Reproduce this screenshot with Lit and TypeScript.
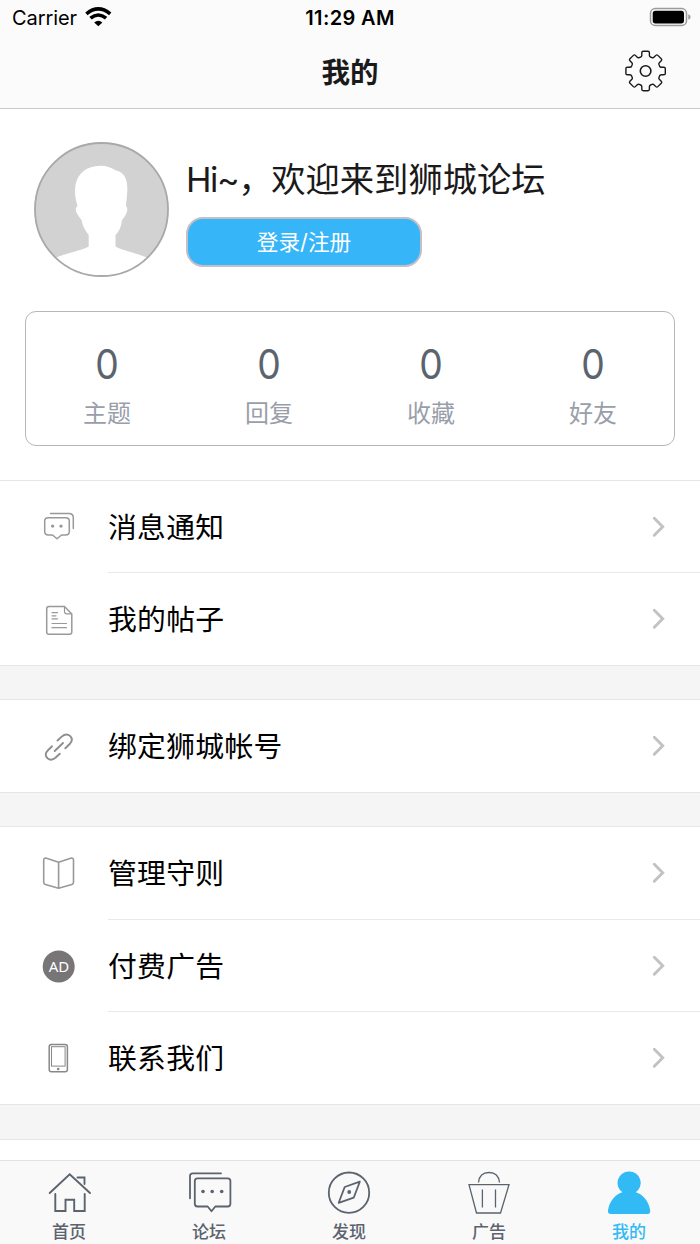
import { LitElement, html, css, svg } from "lit";
import { customElement, property } from "lit/decorators.js";

const toothAngles = [0, 45, 90, 135, 180, 225, 270, 315];

function gearPath(): string {
  const tooth: [string, number[][]][] = [
    ["L", [[-4.9, -14]]],
    ["Q", [[-3.8, -14.5], [-3.8, -15.6]]],
    ["L", [[-3.8, -18.3]]],
    ["Q", [[-3.8, -19.7], [-2.4, -19.7]]],
    ["L", [[2.4, -19.7]]],
    ["Q", [[3.8, -19.7], [3.8, -18.3]]],
    ["L", [[3.8, -15.6]]],
    ["Q", [[3.8, -14.5], [4.9, -14]]],
  ];
  let d = "";
  for (const a of toothAngles) {
    const r = (a * Math.PI) / 180;
    for (const [cmd, pts] of tooth) {
      const p = pts
        .map(([x, y]) => `${(x * Math.cos(r) - y * Math.sin(r)).toFixed(2)} ${(x * Math.sin(r) + y * Math.cos(r)).toFixed(2)}`)
        .join(" ");
      d += (d === "" ? "M" : cmd) + p;
    }
  }
  return d + "Z";
}

const rowIcons: Record<string, unknown> = {
  message: svg`<g fill="none" stroke="#999" stroke-width="1.5" stroke-linecap="round" stroke-linejoin="round">
    <path d="M48.300 517.300h17.500q3.500 0 3.500 3.300v10.400q0 3.500-3.700 3.500h-4.100l-4.500 3.800l-4.500-3.800h-4.100q-3.700 0-3.700-3.500v-10.400q0-3.300 3.600-3.300z"/>
    <path d="M50.500 512.900h18.500q4.300 0 4.300 4.300v10.800"/></g>
    <circle cx="52.600" cy="525.600" r="1.700" fill="#999"/><circle cx="61" cy="525.600" r="1.700" fill="#999"/>`,
  post: svg`<g fill="none" stroke="#999" stroke-width="1.500" stroke-linejoin="round" stroke-linecap="round">
    <path d="M49 606.500h15.500l7.300 7.500v18q0 2.300-2.300 2.300h-20.500q-2.300 0-2.300-2.300v-23.200q0-2.300 2.300-2.300z"/>
    <path d="M64.500 606.700v4.800q0 2.300 2.300 2.300h4.800M52 612.600h5.500M52 615.800h4M52 618.800h5.500M52 623.500h14.500M52 627.700h14.500" stroke-width="1.200"/></g>`,
  link: svg`<g fill="none" stroke="#8e8e8e" stroke-width="1.900" stroke-linecap="round">
    <path d="M57.500 740.500L61.700 736.600Q66.500 732.400 70.300 736.200Q73.700 740 69.700 744L65.300 748.300"/>
    <path d="M52 746.300L48 750.200Q43.700 754.500 47.500 758.200Q51.200 761.300 55.500 757.800L59.800 753.700"/>
    <path d="M54.700 751L63 743"/></g>`,
  book: svg`<path d="M58.600 862.300L46.500 858.300Q43.700 857.500 43.700 860.300V882.300Q43.700 884 45.400 884.500L58.600 888.200L71.800 884.500Q73.500 884 73.500 882.300V860.300Q73.500 857.500 70.700 858.300ZM58.600 862.300V888" fill="none" stroke="#999" stroke-width="1.600" stroke-linejoin="round"/>`,
  ad: svg`<circle cx="58.700" cy="966" r="16" fill="#777576"/>
    <text x="59" y="971.300" text-anchor="middle" style="font-family:'Noto Sans','Open Sans',sans-serif" font-size="15" fill="#fff">AD</text>`,
  phone: svg`<g fill="none" stroke="#888">
    <rect x="49.200" y="1044.500" width="18.200" height="27.300" rx="2.300" stroke-width="1.500"/>
    <rect x="51.500" y="1046.700" width="13.600" height="19.400" stroke-width="1"/></g>
    <circle cx="58.200" cy="1069" r="1.300" fill="#888"/>`,
};

const tabIcons: unknown[] = [
  svg`<g fill="none" stroke="#5b636e" stroke-width="1.900" stroke-linecap="round">
    <path d="M49.700 1193L69.700 1174.300L90 1193M77.500 1177.500H84.500V1184"/>
    <path d="M55.300 1194V1211H65.500V1199.700H74.200V1211H84.700V1194"/></g>`,
  svg`<g fill="none" stroke="#5b636e" stroke-width="1.800" stroke-linecap="round" stroke-linejoin="round">
    <path d="M190 1198.300V1176Q190 1173.300 192.700 1173.300H221"/>
    <path d="M197.500 1178.300H227.700Q230.400 1178.300 230.400 1181V1203.800Q230.400 1206.500 227.700 1206.500H215.300L211.500 1211.300L207.700 1206.500H197.500Q194.800 1206.500 194.800 1203.800V1181Q194.800 1178.300 197.500 1178.300Z"/></g>
    <g fill="#5b636e"><circle cx="203" cy="1191.500" r="1.800"/><circle cx="212.200" cy="1191.500" r="1.800"/><circle cx="221.700" cy="1191.500" r="1.800"/></g>`,
  svg`<g fill="none" stroke="#5b636e" stroke-width="1.800" stroke-linejoin="round">
    <circle cx="349" cy="1192.700" r="20.200"/>
    <path d="M359.800 1181.700L344.700 1187L338.700 1202.800L353.700 1197.700Z"/></g>
    <circle cx="349.200" cy="1192" r="1.900" fill="#5b636e"/>`,
  svg`<path d="M478.500 1182.500Q479.500 1172.500 489 1172.500Q498.500 1172.500 499.500 1182.500M469 1184.700H509L500.500 1213H476.500ZM482.400 1189.500V1207.500M495.500 1189.500V1207.500" fill="none" stroke="#5b636e" stroke-width="1.300"/>`,
  svg`<path d="M629 1171.600a11.300 11.300 0 0 1 6.700 20.700C643.500 1194.500 649 1202 650.200 1210.500Q650.500 1214 647.500 1214H610.700Q607.700 1214 608 1210.500C609.200 1202 614.700 1194.500 622.500 1192.300A11.300 11.300 0 0 1 629 1171.600Z" fill="#32baf5"/>`,
];

@customElement("menu-row")
class MenuRow extends LitElement {
  @property() icon = "";
  @property() label = "";
  @property() box = "";

  static styles = css`
    :host { display: flex; align-items: stretch; flex: 1; }
    .icon { width: 40px; height: 40px; margin: auto 30px auto 38px; flex: none; display: block; }
    .body { flex: 1; display: flex; align-items: center; justify-content: space-between; padding-right: 35px; font-size: 28.800px; letter-spacing: 0.300px; color: #000; }
    .label { line-height: 40px; padding-top: 2px; }
    .chev { width: 14px; height: 22px; display: block; }
  `;

  render() {
    return html`
      <svg class="icon" viewBox=${this.box}>${rowIcons[this.icon]}</svg>
      <div class="body">
        <span class="label">${this.label}</span>
        <svg class="chev" viewBox="0 0 14 22"><path d="M3.300 2.300L11.700 10.800L3.300 19.300" fill="none" stroke="#c2c2c5" stroke-width="2.900" stroke-linecap="round"/></svg>
      </div>
    `;
  }
}

@customElement("app-root")
class AppRoot extends LitElement {
  static styles = css`
    :host { display: block; font-family: Inter, "Noto Sans CJK SC", sans-serif; color: #1a1a1a; }
    * { box-sizing: border-box; }
    .screen { width: 700px; height: 1244px; display: flex; flex-direction: column; background: #fff; overflow: hidden; }
    .top { height: 109px; flex: none; background: #fbfbfb; border-bottom: 1px solid #cbcbcb; display: flex; flex-direction: column; }
    .status { height: 36px; display: grid; grid-template-columns: 1fr auto 1fr; align-items: center; color: #000; padding: 0 9px 0 12px; }
    .carrier { display: flex; align-items: center; gap: 8px; font-size: 20px; letter-spacing: -0.080px; line-height: 36px; }
    .clock { font-size: 20px; font-weight: 600; letter-spacing: 0.350px; line-height: 36px; padding-right: 3px; }
    .wifi { width: 27px; height: 20px; display: block; margin-bottom: 2px; }
    .battery { width: 42px; height: 20px; justify-self: end; display: block; margin-bottom: 2px; }
    .nav { flex: 1; display: grid; grid-template-columns: 1fr auto 1fr; align-items: center; padding: 0 32px; }
    .title { grid-column: 2; font-size: 28.500px; font-weight: 700; line-height: 42px; padding-top: 1px; }
    .gear { width: 44px; height: 44px; justify-self: end; display: block; margin-bottom: 3px; }
    .profile { height: 371px; flex: none; padding: 33px 25px 0; display: flex; flex-direction: column; gap: 34px; }
    .user { height: 135px; display: flex; gap: 17px; padding-left: 9px; }
    .avatar { width: 135px; height: 135px; display: block; flex: none; }
    .hello { padding-top: 14px; }
    .greet { font-size: 34.300px; line-height: 48px; white-space: nowrap; }
    .hi { letter-spacing: -1.400px; }
    .login { width: 236px; height: 50px; margin-top: 13px; border: 2px solid #c2bfc5; border-radius: 17px; background: #36b5f9; color: #fff; font-size: 21.700px; display: flex; align-items: center; justify-content: center; padding-bottom: 3px; }
    .stats { height: 135px; border: 1px solid #b7b7b9; border-radius: 11px; display: grid; grid-template-columns: repeat(4, 1fr); text-align: center; padding-top: 30px; }
    .num { font-size: 41px; line-height: 44px; color: #5b636e; transform: scaleX(0.910); }
    .cap { font-size: 24px; line-height: 34px; color: #999eaa; margin-top: 11px; }
    .group { flex: none; border-top: 1px solid #e6e6e6; border-bottom: 1px solid #e6e6e6; display: flex; flex-direction: column; background: #fff; }
    .tall { flex: 0 0 92px; }
    .short { flex: 0 0 91px; }
    .rest { flex: 1; border-top: 1px solid #e6e6e6; }
    .line { height: 1px; background: #e9e9e9; margin-left: 108px; flex: none; }
    .gap { height: 33px; background: #f5f5f5; flex: none; }
    .gap.last { height: 34px; }
    .tabs { height: 84px; flex: none; background: #f9f9f9; border-top: 1px solid #e3e3e3; display: grid; grid-template-columns: repeat(5, 140px); padding-top: 9px; }
    .tab { display: flex; flex-direction: column; align-items: center; color: #5b636e; font-size: 17px; font-weight: 500; line-height: 24px; padding-right: 2px; }
    .tab.active { color: #32baf5; }
    .tabicon { width: 48px; height: 46px; display: block; margin-bottom: 4px; }
  `;

  render() {
    const stats = ["主题", "回复", "收藏", "好友"];
    const tabs = ["首页", "论坛", "发现", "广告", "我的"];
    const boxes = ["45 1170 48 46", "185 1170 48 46", "325 1170 48 46", "465 1170 48 46", "605 1170 48 46"];
    return html`
      <div class="screen">
        <header class="top">
          <div class="status">
            <div class="carrier">
              <span>Carrier</span>
              <svg class="wifi" viewBox="84 7 27 20">
                <g fill="none" stroke="#000" stroke-width="3.600">
                  <path d="M85.400 13.800Q97.300 4 109.200 13.800"/>
                  <path d="M89.500 18.200Q97.300 11.800 105.100 18.200"/>
                </g>
                <path d="M93.200 22.400Q97.300 19.200 101.400 22.400L97.300 26.300Z"/>
              </svg>
            </div>
            <div class="clock">11:29 AM</div>
            <svg class="battery" viewBox="649 7 42 20">
              <rect x="650.500" y="8.500" width="36" height="17" rx="4.800" fill="none" stroke="#9b9b9b" stroke-width="1.500"/>
              <rect x="652.700" y="10.700" width="31.300" height="12.700" rx="2.700"/>
              <path d="M688.300 14.200Q690.600 15 690.600 17T688.300 19.800Z" fill="#9b9b9b"/>
            </svg>
          </div>
          <div class="nav">
            <div class="title">我的</div>
            <svg class="gear" viewBox="-21.600 -22 44 44">
              <g fill="none" stroke="#1a1a1a" stroke-width="1.400" stroke-linejoin="round">
                <path d=${gearPath()}/><circle r="5.300" stroke-width="1.600"/>
              </g>
            </svg>
          </div>
        </header>
        <section class="profile">
          <div class="user">
            <svg class="avatar" viewBox="0 0 135 135">
              <defs><clipPath id="c"><circle cx="67.500" cy="67.500" r="67"/></clipPath></defs>
              <circle cx="67.500" cy="67.500" r="67" fill="#d2d2d2"/>
              <path clip-path="url(#c)" fill="#fff" d="M66 23.700C73 23.600 78 25.700 82 28.500C90 30 93.500 37 93.300 47C93.300 55 92.200 59 92 64C94.500 66.500 93.500 72 88 78C87 85 85.500 89 81.500 93V104.500C90 109 103 111.300 113 115.500V135H22V115.500C32 111.300 46 109 54.700 104.500V93C51 88.500 48.500 83.500 47.500 78C42 71.500 40 67 43.500 64C41 55 40.500 50 41.500 43C43.500 31 53 23.900 66 23.700Z"/>
              <circle cx="67.500" cy="67.500" r="66.500" fill="none" stroke="#a9a9a9" stroke-width="1.800"/>
            </svg>
            <div class="hello">
              <div class="greet"><span class="hi">Hi~，</span>欢迎来到狮城论坛</div>
              <div class="login">登录/注册</div>
            </div>
          </div>
          <div class="stats">
            ${stats.map((s) => html`<div><div class="num">0</div><div class="cap">${s}</div></div>`)}
          </div>
        </section>
        <div class="group">
          <menu-row class="short" icon="message" label="消息通知" box="38 506.500 40 40"></menu-row>
          <div class="line"></div>
          <menu-row class="tall" icon="post" label="我的帖子" box="38 599 40 40"></menu-row>
        </div>
        <div class="gap"></div>
        <div class="group">
          <menu-row class="tall" icon="link" label="绑定狮城帐号" box="38 726 40 40"></menu-row>
        </div>
        <div class="gap"></div>
        <div class="group">
          <menu-row class="tall" icon="book" label="管理守则" box="38 853 40 40"></menu-row>
          <div class="line"></div>
          <menu-row class="short" icon="ad" label="付费广告" box="38 945.500 40 40"></menu-row>
          <div class="line"></div>
          <menu-row class="tall" icon="phone" label="联系我们" box="38 1038 40 40"></menu-row>
        </div>
        <div class="gap last"></div>
        <div class="rest"></div>
        <nav class="tabs">
          ${tabs.map((t, i) => html`<div class="tab ${i === 4 ? "active" : ""}">
            <svg class="tabicon" viewBox=${boxes[i]}>${tabIcons[i]}</svg><span>${t}</span>
          </div>`)}
        </nav>
      </div>
    `;
  }
}
